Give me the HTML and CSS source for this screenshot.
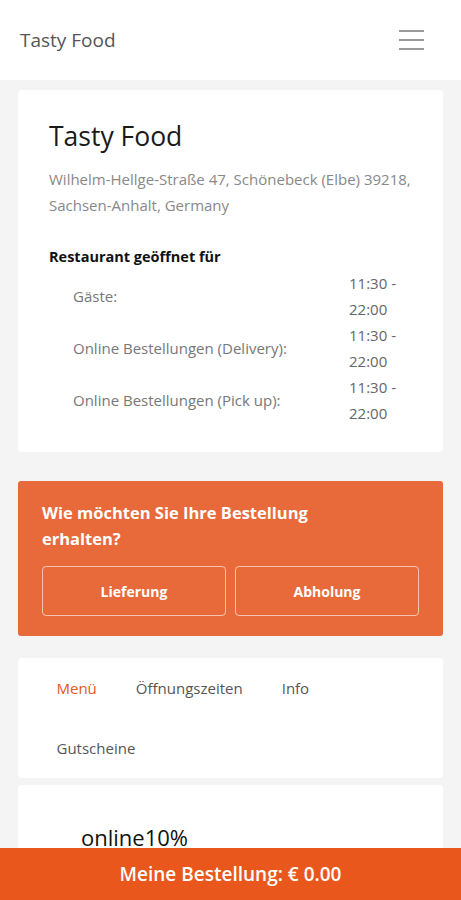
FILE: index.html
```html
<!DOCTYPE html>
<html lang="de">
<head>
  <meta charset="UTF-8">
  <meta name="viewport" content="width=device-width, initial-scale=1.0">
  <title>Tasty Food</title>
  <link rel="stylesheet" href="styles.css">
</head>
<body>
  <header class="topbar">
    <div class="brand">Tasty Food</div>
    <button class="burger" aria-label="Menü">
      <span></span><span></span><span></span>
    </button>
  </header>

  <main class="page">
    <section class="card info-card">
      <h1>Tasty Food</h1>
      <p class="address">Wilhelm-Hellge-Straße 47, Schönebeck (Elbe) 39218, Sachsen-Anhalt, Germany</p>
      <h3>Restaurant geöffnet für</h3>
      <div class="hours">
        <div class="hours-row">
          <span class="label">Gäste:</span>
          <span class="time">11:30 - 22:00</span>
        </div>
        <div class="hours-row">
          <span class="label">Online Bestellungen (Delivery):</span>
          <span class="time">11:30 - 22:00</span>
        </div>
        <div class="hours-row">
          <span class="label">Online Bestellungen (Pick up):</span>
          <span class="time">11:30 - 22:00</span>
        </div>
      </div>
    </section>

    <section class="order-box">
      <h2>Wie möchten Sie Ihre Bestellung erhalten?</h2>
      <div class="order-buttons">
        <button>Lieferung</button>
        <button>Abholung</button>
      </div>
    </section>

    <nav class="card tabs">
      <a class="tab active">Menü</a>
      <a class="tab">Öffnungszeiten</a>
      <a class="tab">Info</a>
      <a class="tab">Gutscheine</a>
    </nav>

    <section class="card menu-card">
      <h2>online10%</h2>
    </section>
  </main>

  <div class="cart-bar">Meine Bestellung: € 0.00</div>
</body>
</html>
```

FILE: styles.css
```css
body {
  margin: 0;
  font-family: "Open Sans", "Noto Sans", sans-serif;
  background: #f4f4f4;
  color: #222;
}
.topbar {
  height: 80px;
  background: #fff;
  display: flex;
  align-items: center;
  justify-content: space-between;
  padding: 0 37px 0 20px;
}
.brand {
  font-size: 19px;
  color: #555;
}
.burger {
  width: 25px;
  padding: 0;
  border: none;
  background: none;
  display: flex;
  flex-direction: column;
  gap: 7px;
}
.burger span {
  height: 2px;
  background: #999;
}
.page {
  padding: 10px 18px 0;
}
.card {
  background: #fff;
  border-radius: 4px;
}
.info-card {
  padding: 26px 20px 26px 31px;
}
.info-card h1 {
  margin: 0;
  font-size: 26.5px;
  font-weight: 400;
  color: #1a1a1a;
  line-height: 40px;
}
.address {
  margin: 10px 0 0;
  font-size: 15px;
  line-height: 26px;
  color: #888;
}
.info-card h3 {
  margin: 29px 0 4px;
  font-size: 14.5px;
  font-weight: 700;
  color: #111;
}
.hours-row {
  display: flex;
  align-items: center;
  padding-left: 24px;
}
.label {
  flex: 1;
  font-size: 15px;
  color: #777;
}
.time {
  width: 74px;
  font-size: 15px;
  line-height: 26px;
  color: #666;
}
.order-box {
  margin-top: 29px;
  background: #e86a3a;
  border-radius: 3px;
  padding: 19px 24px 20px;
}
.order-box h2 {
  margin: 0;
  max-width: 300px;
  font-size: 16.5px;
  font-weight: 700;
  line-height: 26px;
  color: #fff;
}
.order-buttons {
  margin-top: 14px;
  display: grid;
  grid-template-columns: 1fr 1fr;
  gap: 9px;
}
.order-buttons button {
  height: 50px;
  border: 1px solid rgba(255, 255, 255, 0.6);
  border-radius: 4px;
  background: transparent;
  color: #fff;
  font-family: inherit;
  font-size: 14px;
  font-weight: 700;
}
.tabs {
  margin-top: 22px;
  padding: 0 19px;
  display: flex;
  flex-wrap: wrap;
}
.tab {
  height: 60px;
  padding: 0 19.5px;
  display: flex;
  align-items: center;
  font-size: 15px;
  color: #555;
}
.tab.active {
  color: #e05a20;
}
.menu-card {
  margin-top: 7px;
  height: 200px;
  padding: 37px 63px 0;
}
.menu-card h2 {
  margin: 0;
  font-size: 22px;
  font-weight: 500;
  color: #111;
}
.cart-bar {
  position: fixed;
  left: 0;
  right: 0;
  bottom: 0;
  height: 52px;
  background: #e9571d;
  color: #fff;
  display: flex;
  align-items: center;
  justify-content: center;
  font-size: 19px;
  font-weight: 600;
}
```
